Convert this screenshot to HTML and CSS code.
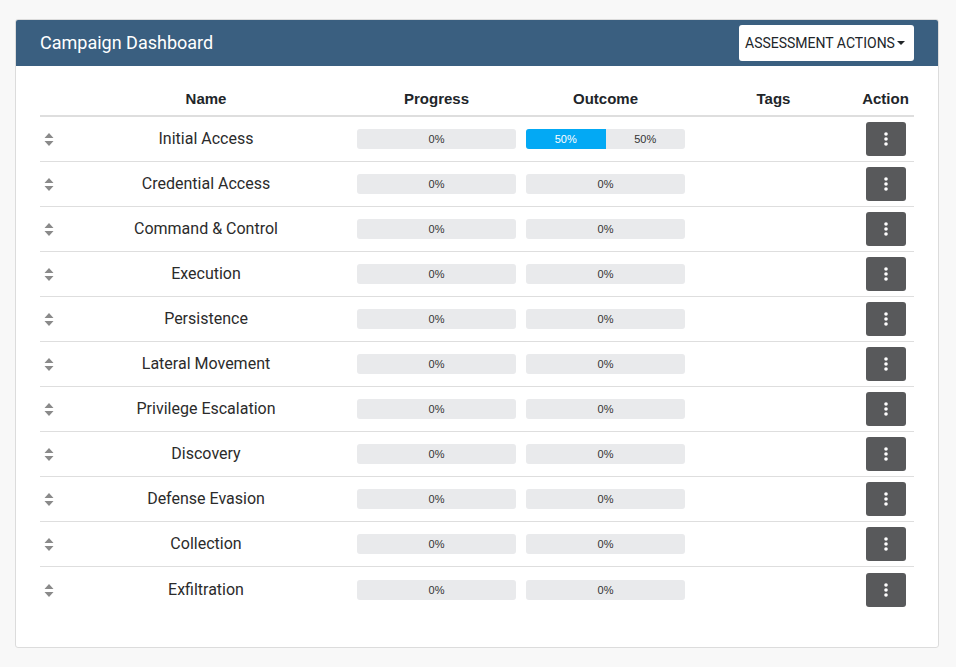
FILE: index.html
```html
<!DOCTYPE html>
<html>
<head>
<meta charset="utf-8">
<link rel="stylesheet" href="styles.css">
</head>
<body>
<div class="card">
  <div class="card-header">
    <h1 class="title">Campaign Dashboard</h1>
    <button class="actions-btn">ASSESSMENT ACTIONS<span class="caret"></span></button>
  </div>
  <div class="card-body">
    <div class="table">
      <div class="row head">
        <div></div>
        <div class="c">Name</div>
        <div class="c">Progress</div>
        <div class="c">Outcome</div>
        <div class="c">Tags</div>
        <div class="c">Action</div>
      </div>
      <div class="row">
        <div class="sort"><svg width="10" height="13" viewBox="0 0 10 13"><path d="M5 0L9.5 5H0.5Z M5 13L9.5 8H0.5Z" fill="#8a8a8a"/></svg></div>
        <div class="c name">Initial Access</div>
        <div class="c"><div class="bar"><span class="bar-txt">0%</span></div></div>
        <div class="c"><div class="bar split"><span class="seg blue">50%</span><span class="seg">50%</span></div></div>
        <div></div>
        <div class="c"><button class="kebab"><svg width="4" height="14" viewBox="0 0 4 14"><circle cx="2" cy="2" r="1.8" fill="#fff"/><circle cx="2" cy="7" r="1.8" fill="#fff"/><circle cx="2" cy="12" r="1.8" fill="#fff"/></svg></button></div>
      </div>
      <div class="row">
        <div class="sort"><svg width="10" height="13" viewBox="0 0 10 13"><path d="M5 0L9.5 5H0.5Z M5 13L9.5 8H0.5Z" fill="#8a8a8a"/></svg></div>
        <div class="c name">Credential Access</div>
        <div class="c"><div class="bar"><span class="bar-txt">0%</span></div></div>
        <div class="c"><div class="bar"><span class="bar-txt">0%</span></div></div>
        <div></div>
        <div class="c"><button class="kebab"><svg width="4" height="14" viewBox="0 0 4 14"><circle cx="2" cy="2" r="1.8" fill="#fff"/><circle cx="2" cy="7" r="1.8" fill="#fff"/><circle cx="2" cy="12" r="1.8" fill="#fff"/></svg></button></div>
      </div>
      <div class="row">
        <div class="sort"><svg width="10" height="13" viewBox="0 0 10 13"><path d="M5 0L9.5 5H0.5Z M5 13L9.5 8H0.5Z" fill="#8a8a8a"/></svg></div>
        <div class="c name">Command &amp; Control</div>
        <div class="c"><div class="bar"><span class="bar-txt">0%</span></div></div>
        <div class="c"><div class="bar"><span class="bar-txt">0%</span></div></div>
        <div></div>
        <div class="c"><button class="kebab"><svg width="4" height="14" viewBox="0 0 4 14"><circle cx="2" cy="2" r="1.8" fill="#fff"/><circle cx="2" cy="7" r="1.8" fill="#fff"/><circle cx="2" cy="12" r="1.8" fill="#fff"/></svg></button></div>
      </div>
      <div class="row">
        <div class="sort"><svg width="10" height="13" viewBox="0 0 10 13"><path d="M5 0L9.5 5H0.5Z M5 13L9.5 8H0.5Z" fill="#8a8a8a"/></svg></div>
        <div class="c name">Execution</div>
        <div class="c"><div class="bar"><span class="bar-txt">0%</span></div></div>
        <div class="c"><div class="bar"><span class="bar-txt">0%</span></div></div>
        <div></div>
        <div class="c"><button class="kebab"><svg width="4" height="14" viewBox="0 0 4 14"><circle cx="2" cy="2" r="1.8" fill="#fff"/><circle cx="2" cy="7" r="1.8" fill="#fff"/><circle cx="2" cy="12" r="1.8" fill="#fff"/></svg></button></div>
      </div>
      <div class="row">
        <div class="sort"><svg width="10" height="13" viewBox="0 0 10 13"><path d="M5 0L9.5 5H0.5Z M5 13L9.5 8H0.5Z" fill="#8a8a8a"/></svg></div>
        <div class="c name">Persistence</div>
        <div class="c"><div class="bar"><span class="bar-txt">0%</span></div></div>
        <div class="c"><div class="bar"><span class="bar-txt">0%</span></div></div>
        <div></div>
        <div class="c"><button class="kebab"><svg width="4" height="14" viewBox="0 0 4 14"><circle cx="2" cy="2" r="1.8" fill="#fff"/><circle cx="2" cy="7" r="1.8" fill="#fff"/><circle cx="2" cy="12" r="1.8" fill="#fff"/></svg></button></div>
      </div>
      <div class="row">
        <div class="sort"><svg width="10" height="13" viewBox="0 0 10 13"><path d="M5 0L9.5 5H0.5Z M5 13L9.5 8H0.5Z" fill="#8a8a8a"/></svg></div>
        <div class="c name">Lateral Movement</div>
        <div class="c"><div class="bar"><span class="bar-txt">0%</span></div></div>
        <div class="c"><div class="bar"><span class="bar-txt">0%</span></div></div>
        <div></div>
        <div class="c"><button class="kebab"><svg width="4" height="14" viewBox="0 0 4 14"><circle cx="2" cy="2" r="1.8" fill="#fff"/><circle cx="2" cy="7" r="1.8" fill="#fff"/><circle cx="2" cy="12" r="1.8" fill="#fff"/></svg></button></div>
      </div>
      <div class="row">
        <div class="sort"><svg width="10" height="13" viewBox="0 0 10 13"><path d="M5 0L9.5 5H0.5Z M5 13L9.5 8H0.5Z" fill="#8a8a8a"/></svg></div>
        <div class="c name">Privilege Escalation</div>
        <div class="c"><div class="bar"><span class="bar-txt">0%</span></div></div>
        <div class="c"><div class="bar"><span class="bar-txt">0%</span></div></div>
        <div></div>
        <div class="c"><button class="kebab"><svg width="4" height="14" viewBox="0 0 4 14"><circle cx="2" cy="2" r="1.8" fill="#fff"/><circle cx="2" cy="7" r="1.8" fill="#fff"/><circle cx="2" cy="12" r="1.8" fill="#fff"/></svg></button></div>
      </div>
      <div class="row">
        <div class="sort"><svg width="10" height="13" viewBox="0 0 10 13"><path d="M5 0L9.5 5H0.5Z M5 13L9.5 8H0.5Z" fill="#8a8a8a"/></svg></div>
        <div class="c name">Discovery</div>
        <div class="c"><div class="bar"><span class="bar-txt">0%</span></div></div>
        <div class="c"><div class="bar"><span class="bar-txt">0%</span></div></div>
        <div></div>
        <div class="c"><button class="kebab"><svg width="4" height="14" viewBox="0 0 4 14"><circle cx="2" cy="2" r="1.8" fill="#fff"/><circle cx="2" cy="7" r="1.8" fill="#fff"/><circle cx="2" cy="12" r="1.8" fill="#fff"/></svg></button></div>
      </div>
      <div class="row">
        <div class="sort"><svg width="10" height="13" viewBox="0 0 10 13"><path d="M5 0L9.5 5H0.5Z M5 13L9.5 8H0.5Z" fill="#8a8a8a"/></svg></div>
        <div class="c name">Defense Evasion</div>
        <div class="c"><div class="bar"><span class="bar-txt">0%</span></div></div>
        <div class="c"><div class="bar"><span class="bar-txt">0%</span></div></div>
        <div></div>
        <div class="c"><button class="kebab"><svg width="4" height="14" viewBox="0 0 4 14"><circle cx="2" cy="2" r="1.8" fill="#fff"/><circle cx="2" cy="7" r="1.8" fill="#fff"/><circle cx="2" cy="12" r="1.8" fill="#fff"/></svg></button></div>
      </div>
      <div class="row">
        <div class="sort"><svg width="10" height="13" viewBox="0 0 10 13"><path d="M5 0L9.5 5H0.5Z M5 13L9.5 8H0.5Z" fill="#8a8a8a"/></svg></div>
        <div class="c name">Collection</div>
        <div class="c"><div class="bar"><span class="bar-txt">0%</span></div></div>
        <div class="c"><div class="bar"><span class="bar-txt">0%</span></div></div>
        <div></div>
        <div class="c"><button class="kebab"><svg width="4" height="14" viewBox="0 0 4 14"><circle cx="2" cy="2" r="1.8" fill="#fff"/><circle cx="2" cy="7" r="1.8" fill="#fff"/><circle cx="2" cy="12" r="1.8" fill="#fff"/></svg></button></div>
      </div>
      <div class="row last">
        <div class="sort"><svg width="10" height="13" viewBox="0 0 10 13"><path d="M5 0L9.5 5H0.5Z M5 13L9.5 8H0.5Z" fill="#8a8a8a"/></svg></div>
        <div class="c name">Exfiltration</div>
        <div class="c"><div class="bar"><span class="bar-txt">0%</span></div></div>
        <div class="c"><div class="bar"><span class="bar-txt">0%</span></div></div>
        <div></div>
        <div class="c"><button class="kebab"><svg width="4" height="14" viewBox="0 0 4 14"><circle cx="2" cy="2" r="1.8" fill="#fff"/><circle cx="2" cy="7" r="1.8" fill="#fff"/><circle cx="2" cy="12" r="1.8" fill="#fff"/></svg></button></div>
      </div>
    </div>
  </div>
</div>
</body>
</html>
```
FILE: styles.css
```css
* { box-sizing: border-box; }
html, body { margin: 0; padding: 0; }
body {
  background: #f8f8f8;
  font-family: Roboto, "Liberation Sans", sans-serif;
  color: #212529;
  padding: 19px 17px 0 15px;
}
.card {
  width: 924px;
  background: #fff;
  border: 1px solid #dcdcdc;
  border-radius: 3px;
  overflow: hidden;
}
.card-header {
  background: #3a5f80;
  height: 46px;
  display: flex;
  align-items: center;
  justify-content: space-between;
  padding: 0 24px 0 24px;
}
.title {
  margin: 0 0 1px 0;
  font-size: 18px;
  font-weight: 400;
  color: #fff;
}
.actions-btn {
  height: 36px;
  width: 175px;
  background: #fff;
  border: none;
  border-radius: 3px;
  font-family: Roboto, "Liberation Sans", sans-serif;
  font-size: 14px;
  color: #212529;
  padding: 0 0 0 6px;
  display: flex;
  align-items: center;
  cursor: pointer;
}
.caret {
  display: inline-block;
  width: 0; height: 0;
  border-left: 4px solid transparent;
  border-right: 4px solid transparent;
  border-top: 4px solid #212529;
  margin-left: 2px;
}
.card-body {
  padding: 15px 23px 35px 24px;
}
.table { width: 874px; }
.row {
  display: grid;
  grid-template-columns: 20px 292px 169px 169px 167px 57px;
  height: 45px;
  align-items: center;
  border-bottom: 1px solid #dedede;
}
.row.last { border-bottom: none; }
.row.head {
  height: 36px;
  border-bottom: 2px solid #dedede;
  font-family: "Liberation Sans", Arial, sans-serif;
  font-weight: 700;
  font-size: 15px;
  color: #212529;
}
.c { text-align: center; display: flex; justify-content: center; }
.name { font-size: 16px; color: #2b2b2b; padding-bottom: 1px; }
.sort { display: flex; padding-left: 4px; padding-top: 1px; }
.bar {
  width: 159px;
  height: 20px;
  background: #e9eaec;
  border-radius: 3px;
  display: flex;
  align-items: center;
  justify-content: center;
  overflow: hidden;
  font-family: "Liberation Sans", Arial, sans-serif;
  font-size: 11px;
  color: #333;
}
.bar.split { justify-content: flex-start; }
.seg {
  width: 80px;
  height: 20px;
  display: flex;
  align-items: center;
  justify-content: center;
}
.seg.blue { background: #03a9f4; color: #fff; }
.kebab {
  width: 40px;
  height: 34px;
  background: #58595b;
  border: none;
  border-radius: 3px;
  display: flex;
  align-items: center;
  justify-content: center;
  padding: 0;
  cursor: pointer;
}
```
